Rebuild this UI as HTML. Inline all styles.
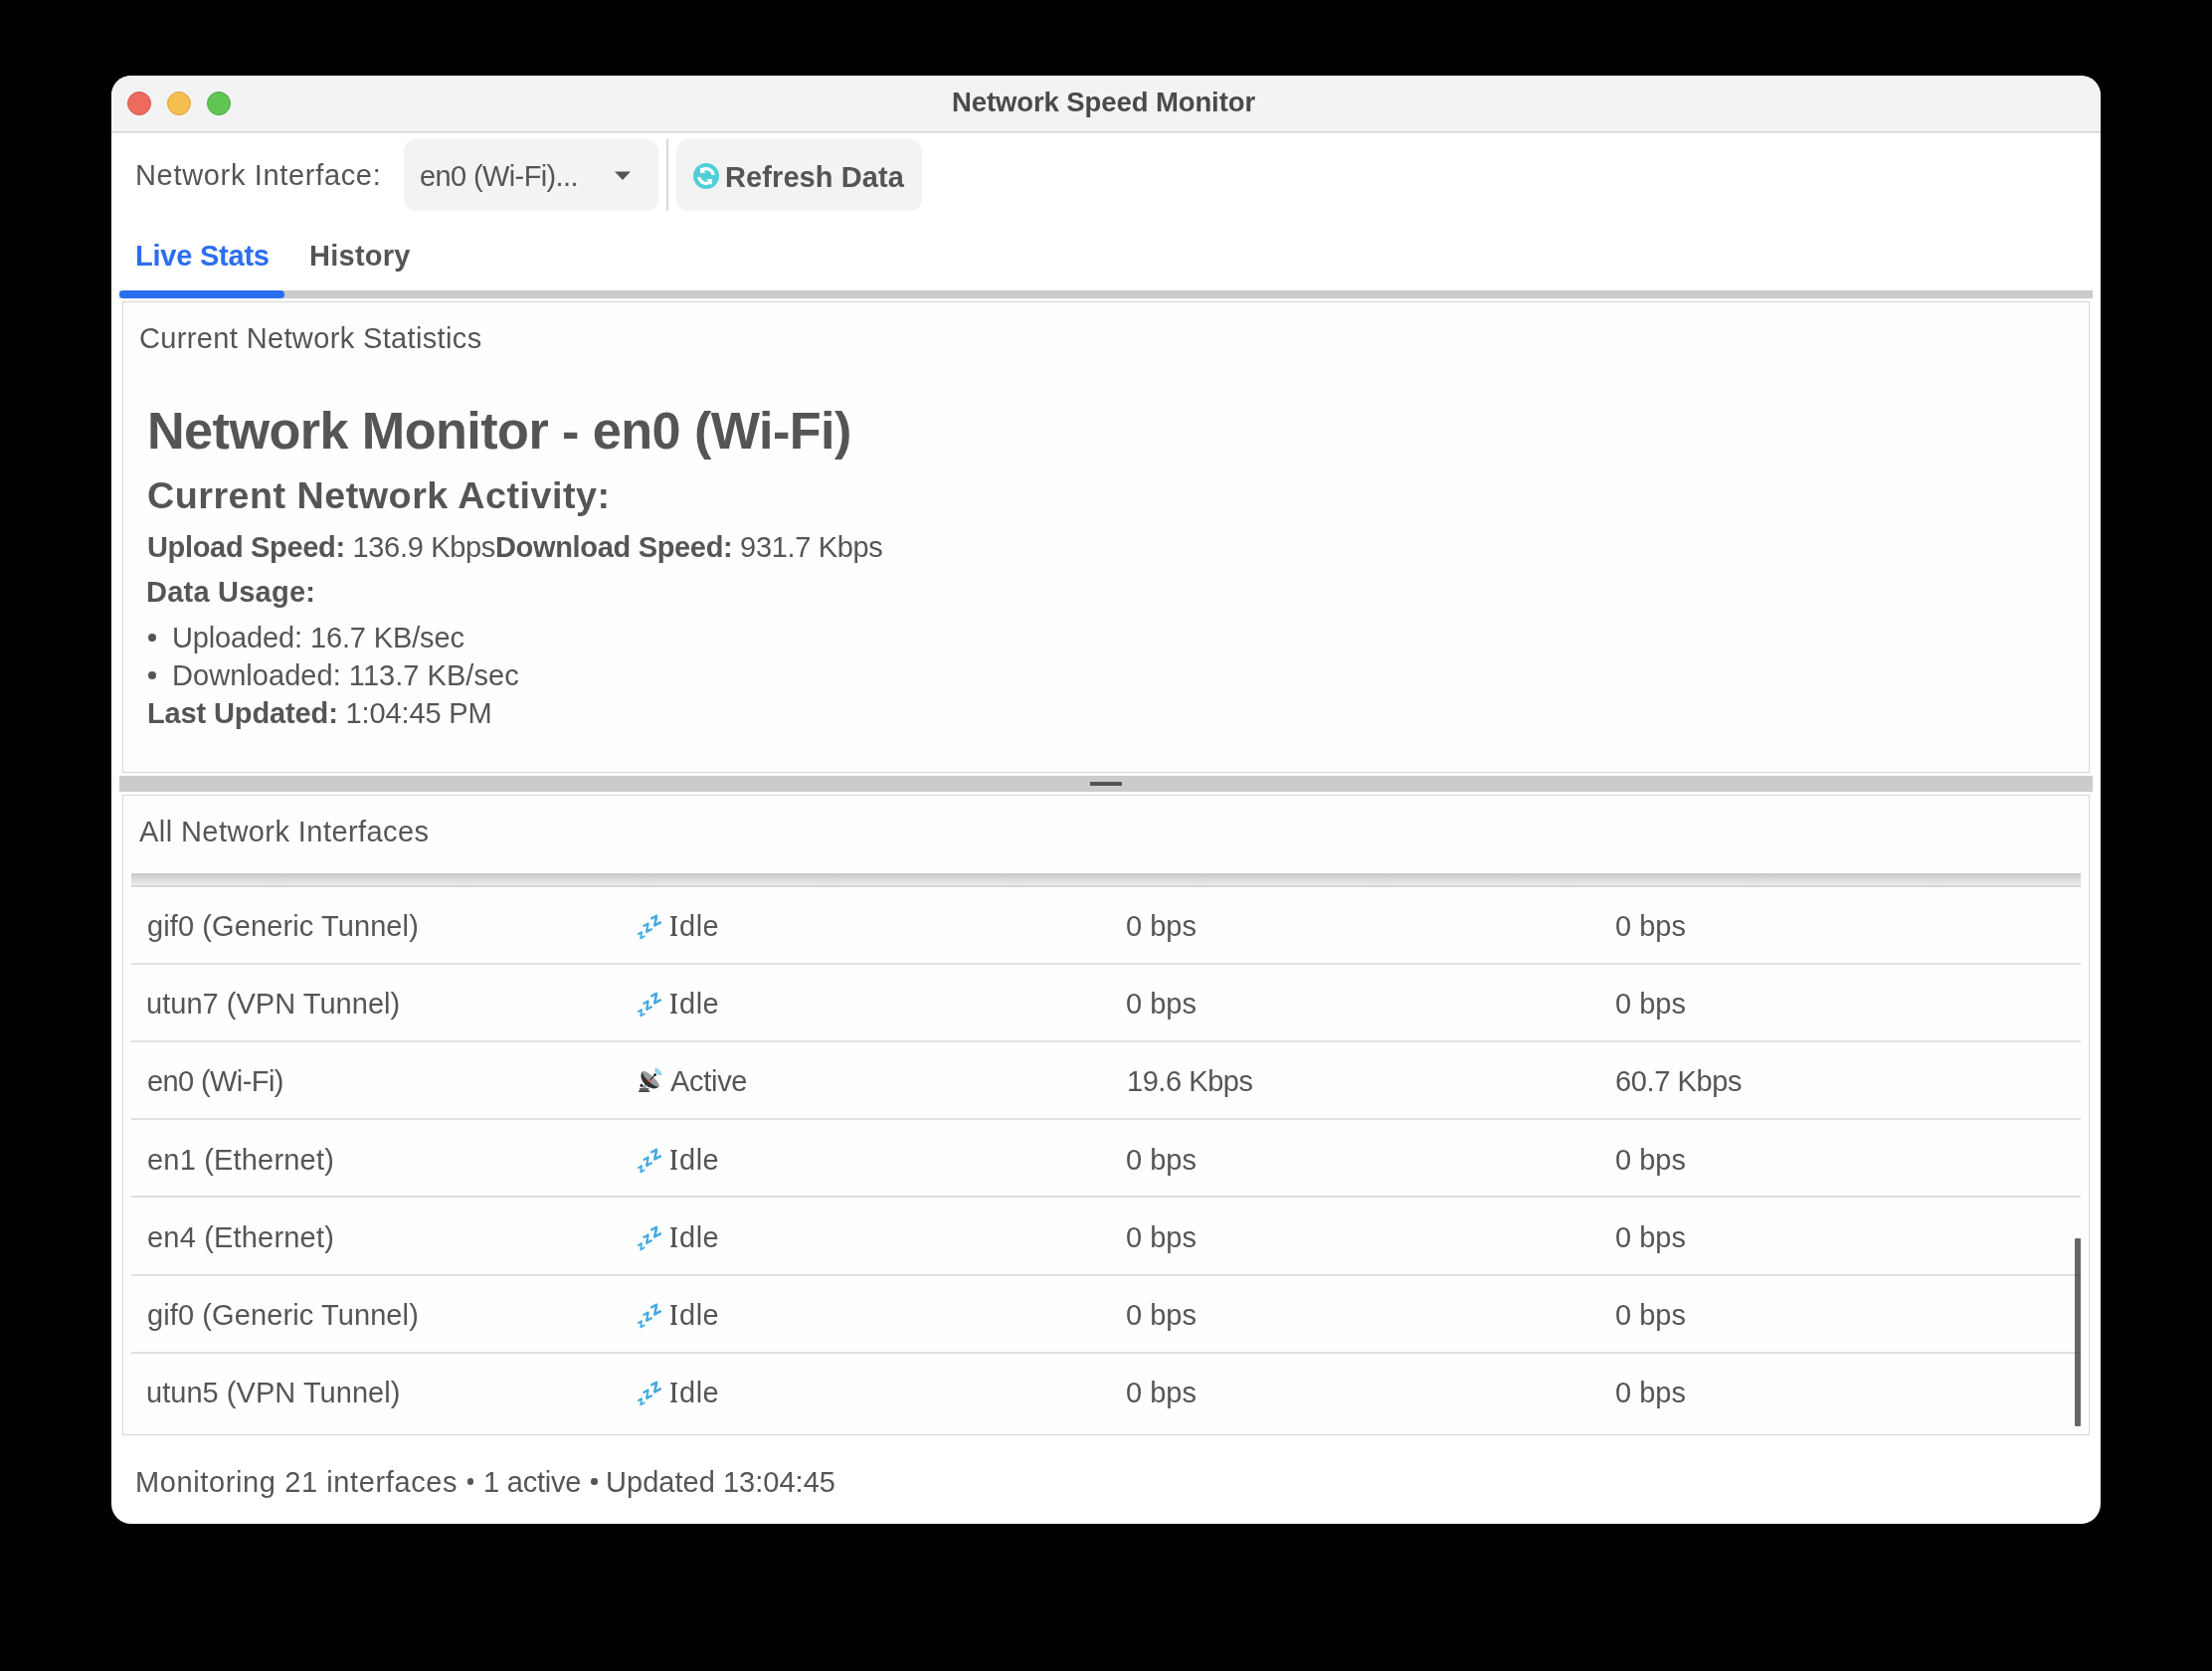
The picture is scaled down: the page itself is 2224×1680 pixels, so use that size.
<!DOCTYPE html>
<html><head><meta charset="utf-8"><style>
html,body{margin:0;padding:0}
body{width:2224px;height:1680px;background:#000;position:relative;overflow:hidden;font-family:"Liberation Sans",sans-serif}
.t{position:absolute;white-space:nowrap;will-change:transform}
.abs{position:absolute}
b{font-weight:bold}
</style></head><body>

<div class="abs" style="left:112px;top:76px;width:2000px;height:1456px;border-radius:20px;background:#ffffff;overflow:hidden">
<div class="abs" style="left:0;top:0;width:2000px;height:56px;background:#f3f3f3"></div>
<div class="abs" style="left:0;top:56px;width:2000px;height:1px;background:#d3d3d3"></div>
<div class="abs" style="left:0;top:57px;width:2000px;height:1px;background:#e8e8e8"></div>
</div>
<div class="abs" style="left:128px;top:92px;width:22px;height:22px;border-radius:50%;background:#ed6a5e;border:1px solid #d9544a"></div>
<div class="abs" style="left:168px;top:92px;width:22px;height:22px;border-radius:50%;background:#f5bf4f;border:1px solid #dba43e"></div>
<div class="abs" style="left:208px;top:92px;width:22px;height:22px;border-radius:50%;background:#61c554;border:1px solid #4aa93f"></div>
<div class="t" style="left:957.0px;top:89.0px;font-size:27.5px;line-height:27.5px;font-weight:bold;letter-spacing:-0.1px;color:#4a4a4a;">Network Speed Monitor</div>
<div class="t" style="left:135.6px;top:162.0px;font-size:29.0px;line-height:29.0px;font-weight:normal;letter-spacing:0.671px;color:#555555;">Network Interface:</div>
<div class="abs" style="left:406px;top:140px;width:256px;height:72px;border-radius:12px;background:#f3f3f3"></div>
<div class="t" style="left:422.0px;top:163.0px;font-size:29.0px;line-height:29.0px;font-weight:normal;letter-spacing:-0.615px;color:#555555;">en0 (Wi-Fi)...</div>
<svg class="abs" style="left:616px;top:170px" width="20" height="14" viewBox="0 0 20 14"><path d="M2 2.4 L18 2.4 L10 11 Z" fill="#555"/></svg>
<div class="abs" style="left:670px;top:140px;width:2px;height:72px;background:#d8d8d8"></div>
<div class="abs" style="left:680px;top:140px;width:247px;height:72px;border-radius:12px;background:#f3f3f3"></div>
<svg class="abs" style="left:697px;top:164px" width="26" height="26" viewBox="0 0 26 26">
<circle cx="13" cy="13" r="13" fill="#4ecfd8"/>
<path id="ra" d="M7 4 L8.5 5.2 A9 9 0 0 1 21.9 11.9 L18.56 11.9 A5.6 5.6 0 0 0 10.6 7.9 L12.9 9.9 L7 9.9 Z" fill="#fff"/>
<path d="M7 4 L8.5 5.2 A9 9 0 0 1 21.9 11.9 L18.56 11.9 A5.6 5.6 0 0 0 10.6 7.9 L12.9 9.9 L7 9.9 Z" fill="#fff" transform="rotate(180 13 13)"/>
</svg>
<div class="t" style="left:729.0px;top:164.0px;font-size:29.0px;line-height:29.0px;font-weight:bold;letter-spacing:0.091px;color:#555555;">Refresh Data</div>
<div class="t" style="left:136.0px;top:243.0px;font-size:29.0px;line-height:29.0px;font-weight:bold;letter-spacing:-0.222px;color:#2b6ef0;">Live Stats</div>
<div class="t" style="left:310.5px;top:243.0px;font-size:29.0px;line-height:29.0px;font-weight:bold;letter-spacing:0.25px;color:#555555;">History</div>
<div class="abs" style="left:120px;top:292px;width:1984px;height:8px;background:#cbcbcb"></div>
<div class="abs" style="left:120px;top:292px;width:166px;height:8px;border-radius:4px;background:#2a6ef0"></div>
<div class="abs" style="left:123px;top:303px;width:1976px;height:472px;border:1px solid #d6d6d6;background:#fefefe"></div>
<div class="t" style="left:140.0px;top:326.0px;font-size:29.0px;line-height:29.0px;font-weight:normal;letter-spacing:0.36px;color:#555555;">Current Network Statistics</div>
<div class="t" style="left:148.0px;top:407.0px;font-size:52.2px;line-height:52.2px;font-weight:bold;letter-spacing:-0.571px;color:#555555;">Network Monitor - en0 (Wi-Fi)</div>
<div class="t" style="left:148.0px;top:480.0px;font-size:37.7px;line-height:37.7px;font-weight:bold;letter-spacing:0.5px;color:#555555;">Current Network Activity:</div>
<div class="t" style="left:148.0px;top:535.5px;font-size:29.0px;line-height:29.0px;font-weight:normal;letter-spacing:-0.327px;color:#555555;"><b>Upload Speed:</b> 136.9 Kbps<b>Download Speed:</b> 931.7 Kbps</div>
<div class="t" style="left:147.4px;top:581.0px;font-size:29.0px;line-height:29.0px;font-weight:bold;letter-spacing:0.23px;color:#555555;">Data Usage:</div>
<div class="abs" style="left:149px;top:637px;width:8px;height:8px;border-radius:50%;background:#555"></div>
<div class="t" style="left:172.7px;top:627.0px;font-size:29.0px;line-height:29.0px;font-weight:normal;letter-spacing:-0.135px;color:#555555;">Uploaded: 16.7 KB/sec</div>
<div class="abs" style="left:149px;top:675px;width:8px;height:8px;border-radius:50%;background:#555"></div>
<div class="t" style="left:173.0px;top:665.0px;font-size:29.0px;line-height:29.0px;font-weight:normal;letter-spacing:0.043px;color:#555555;">Downloaded: 113.7 KB/sec</div>
<div class="t" style="left:148.0px;top:703.0px;font-size:29.0px;line-height:29.0px;font-weight:normal;letter-spacing:-0.13px;color:#555555;"><b>Last Updated:</b> 1:04:45 PM</div>
<div class="abs" style="left:120px;top:780px;width:1984px;height:16px;background:#cccccc"></div>
<div class="abs" style="left:1096px;top:786px;width:32px;height:4px;background:#555"></div>
<div class="abs" style="left:123px;top:799px;width:1976px;height:642px;border:1px solid #d6d6d6;background:#fefefe"></div>
<div class="t" style="left:140.0px;top:822.0px;font-size:29.0px;line-height:29.0px;font-weight:normal;letter-spacing:0.429px;color:#555555;">All Network Interfaces</div>
<div class="abs" style="left:132px;top:878px;width:1960px;height:12px;background:linear-gradient(#c9c9c9,#ececec)"></div>
<div class="abs" style="left:132px;top:890px;width:1960px;height:2px;background:#d6d6d6"></div>
<div class="abs" style="left:132px;top:968px;width:1960px;height:2px;background:#e0e0e0"></div>
<div class="abs" style="left:132px;top:1046px;width:1960px;height:2px;background:#e0e0e0"></div>
<div class="abs" style="left:132px;top:1124px;width:1960px;height:2px;background:#e0e0e0"></div>
<div class="abs" style="left:132px;top:1202px;width:1960px;height:2px;background:#e0e0e0"></div>
<div class="abs" style="left:132px;top:1281px;width:1960px;height:2px;background:#e0e0e0"></div>
<div class="abs" style="left:132px;top:1359px;width:1960px;height:2px;background:#e0e0e0"></div>
<div class="t" style="left:148.0px;top:917px;font-size:29.0px;line-height:29.0px;font-weight:normal;letter-spacing:0.1px;color:#555555;">gif0 (Generic Tunnel)</div>
<svg class="abs" style="left:640px;top:919px;will-change:transform" width="26" height="26" viewBox="0 0 26 26">
<g fill="#3fa9e1" font-family="Liberation Sans" font-weight="bold" text-anchor="middle">
<text transform="translate(4.6 21.3) rotate(-32)" y="3" font-size="8.8" stroke="#3fa9e1" stroke-width="0.7">Z</text>
<text transform="translate(11.1 13.7) rotate(-28)" y="3.9" font-size="11.4" stroke="#3fa9e1" stroke-width="0.8">Z</text>
<text transform="translate(19.4 6.6) rotate(-27)" y="4.6" font-size="13.4" stroke="#3fa9e1" stroke-width="0.9">Z</text>
</g></svg>
<div class="abs" style="left:674px;top:921px;width:7px;height:2px;background:#555;border-radius:0 0 3px 3px"></div>
<div class="abs" style="left:674px;top:939px;width:7px;height:2px;background:#555;border-radius:3px 3px 0 0"></div>
<div class="abs" style="left:676.3px;top:921px;width:2.7px;height:20px;background:#555"></div>
<div class="t" style="left:683.0px;top:917px;font-size:29.0px;line-height:29.0px;font-weight:normal;letter-spacing:0.5px;color:#555555;">dle</div>
<div class="t" style="left:1132.0px;top:917px;font-size:29.0px;line-height:29.0px;font-weight:normal;letter-spacing:0.0px;color:#555555;">0 bps</div>
<div class="t" style="left:1624.0px;top:917px;font-size:29.0px;line-height:29.0px;font-weight:normal;letter-spacing:0.0px;color:#555555;">0 bps</div>
<div class="t" style="left:147.0px;top:995px;font-size:29.0px;line-height:29.0px;font-weight:normal;letter-spacing:0.029px;color:#555555;">utun7 (VPN Tunnel)</div>
<svg class="abs" style="left:640px;top:997px;will-change:transform" width="26" height="26" viewBox="0 0 26 26">
<g fill="#3fa9e1" font-family="Liberation Sans" font-weight="bold" text-anchor="middle">
<text transform="translate(4.6 21.3) rotate(-32)" y="3" font-size="8.8" stroke="#3fa9e1" stroke-width="0.7">Z</text>
<text transform="translate(11.1 13.7) rotate(-28)" y="3.9" font-size="11.4" stroke="#3fa9e1" stroke-width="0.8">Z</text>
<text transform="translate(19.4 6.6) rotate(-27)" y="4.6" font-size="13.4" stroke="#3fa9e1" stroke-width="0.9">Z</text>
</g></svg>
<div class="abs" style="left:674px;top:999px;width:7px;height:2px;background:#555;border-radius:0 0 3px 3px"></div>
<div class="abs" style="left:674px;top:1017px;width:7px;height:2px;background:#555;border-radius:3px 3px 0 0"></div>
<div class="abs" style="left:676.3px;top:999px;width:2.7px;height:20px;background:#555"></div>
<div class="t" style="left:683.0px;top:995px;font-size:29.0px;line-height:29.0px;font-weight:normal;letter-spacing:0.5px;color:#555555;">dle</div>
<div class="t" style="left:1132.0px;top:995px;font-size:29.0px;line-height:29.0px;font-weight:normal;letter-spacing:0.0px;color:#555555;">0 bps</div>
<div class="t" style="left:1624.0px;top:995px;font-size:29.0px;line-height:29.0px;font-weight:normal;letter-spacing:0.0px;color:#555555;">0 bps</div>
<div class="t" style="left:148.0px;top:1073px;font-size:29.0px;line-height:29.0px;font-weight:normal;letter-spacing:-0.6px;color:#555555;">en0 (Wi-Fi)</div>
<svg class="abs" style="left:640px;top:1074px" width="26" height="26" viewBox="0 0 26 26">
<path d="M5.2 18 L8.6 16.6 L10.8 21 H6.6 Z" fill="#9a9c9e"/>
<rect x="3" y="20" width="9.2" height="3.4" fill="#5f5f5f"/>
<rect x="2" y="22.6" width="11.2" height="1.4" fill="#4a4a4a"/>
<ellipse cx="4.9" cy="17.3" rx="1.3" ry="1.6" fill="#111"/>
<g transform="translate(14.5 10.55) rotate(42.9)">
<path d="M-11.25 0 A11.25 8.4 0 0 0 11.25 0 Z" fill="#333"/>
<ellipse cx="0" cy="0.3" rx="11.25" ry="3.2" fill="#999da1"/>
</g>
<line x1="13.1" y1="12.5" x2="18.6" y2="6.7" stroke="#333" stroke-width="1.1"/>
<circle cx="13.1" cy="12.5" r="1.4" fill="#e65a50"/>
<circle cx="18.6" cy="6.7" r="1.4" fill="#1a1a1a"/>
<g fill="none" stroke="#3fa6e3" stroke-width="0.9">
<path d="M18.6 3.5 A3.2 3.2 0 0 1 21.8 6.6"/>
<path d="M18.6 2.1 A4.6 4.6 0 0 1 23.2 6.8"/>
<path d="M18.4 0.7 A6 6 0 0 1 24.6 6.9"/>
</g>
</svg>
<div class="t" style="left:673.5px;top:1073px;font-size:29.0px;line-height:29.0px;font-weight:normal;letter-spacing:-0.3px;color:#555555;">Active</div>
<div class="t" style="left:1132.6px;top:1073px;font-size:29.0px;line-height:29.0px;font-weight:normal;letter-spacing:-0.45px;color:#555555;">19.6 Kbps</div>
<div class="t" style="left:1624.0px;top:1073px;font-size:29.0px;line-height:29.0px;font-weight:normal;letter-spacing:-0.375px;color:#555555;">60.7 Kbps</div>
<div class="t" style="left:148.0px;top:1152px;font-size:29.0px;line-height:29.0px;font-weight:normal;letter-spacing:0.185px;color:#555555;">en1 (Ethernet)</div>
<svg class="abs" style="left:640px;top:1154px;will-change:transform" width="26" height="26" viewBox="0 0 26 26">
<g fill="#3fa9e1" font-family="Liberation Sans" font-weight="bold" text-anchor="middle">
<text transform="translate(4.6 21.3) rotate(-32)" y="3" font-size="8.8" stroke="#3fa9e1" stroke-width="0.7">Z</text>
<text transform="translate(11.1 13.7) rotate(-28)" y="3.9" font-size="11.4" stroke="#3fa9e1" stroke-width="0.8">Z</text>
<text transform="translate(19.4 6.6) rotate(-27)" y="4.6" font-size="13.4" stroke="#3fa9e1" stroke-width="0.9">Z</text>
</g></svg>
<div class="abs" style="left:674px;top:1156px;width:7px;height:2px;background:#555;border-radius:0 0 3px 3px"></div>
<div class="abs" style="left:674px;top:1174px;width:7px;height:2px;background:#555;border-radius:3px 3px 0 0"></div>
<div class="abs" style="left:676.3px;top:1156px;width:2.7px;height:20px;background:#555"></div>
<div class="t" style="left:683.0px;top:1152px;font-size:29.0px;line-height:29.0px;font-weight:normal;letter-spacing:0.5px;color:#555555;">dle</div>
<div class="t" style="left:1132.0px;top:1152px;font-size:29.0px;line-height:29.0px;font-weight:normal;letter-spacing:0.0px;color:#555555;">0 bps</div>
<div class="t" style="left:1624.0px;top:1152px;font-size:29.0px;line-height:29.0px;font-weight:normal;letter-spacing:0.0px;color:#555555;">0 bps</div>
<div class="t" style="left:148.0px;top:1230px;font-size:29.0px;line-height:29.0px;font-weight:normal;letter-spacing:0.185px;color:#555555;">en4 (Ethernet)</div>
<svg class="abs" style="left:640px;top:1232px;will-change:transform" width="26" height="26" viewBox="0 0 26 26">
<g fill="#3fa9e1" font-family="Liberation Sans" font-weight="bold" text-anchor="middle">
<text transform="translate(4.6 21.3) rotate(-32)" y="3" font-size="8.8" stroke="#3fa9e1" stroke-width="0.7">Z</text>
<text transform="translate(11.1 13.7) rotate(-28)" y="3.9" font-size="11.4" stroke="#3fa9e1" stroke-width="0.8">Z</text>
<text transform="translate(19.4 6.6) rotate(-27)" y="4.6" font-size="13.4" stroke="#3fa9e1" stroke-width="0.9">Z</text>
</g></svg>
<div class="abs" style="left:674px;top:1234px;width:7px;height:2px;background:#555;border-radius:0 0 3px 3px"></div>
<div class="abs" style="left:674px;top:1252px;width:7px;height:2px;background:#555;border-radius:3px 3px 0 0"></div>
<div class="abs" style="left:676.3px;top:1234px;width:2.7px;height:20px;background:#555"></div>
<div class="t" style="left:683.0px;top:1230px;font-size:29.0px;line-height:29.0px;font-weight:normal;letter-spacing:0.5px;color:#555555;">dle</div>
<div class="t" style="left:1132.0px;top:1230px;font-size:29.0px;line-height:29.0px;font-weight:normal;letter-spacing:0.0px;color:#555555;">0 bps</div>
<div class="t" style="left:1624.0px;top:1230px;font-size:29.0px;line-height:29.0px;font-weight:normal;letter-spacing:0.0px;color:#555555;">0 bps</div>
<div class="t" style="left:148.0px;top:1308px;font-size:29.0px;line-height:29.0px;font-weight:normal;letter-spacing:0.1px;color:#555555;">gif0 (Generic Tunnel)</div>
<svg class="abs" style="left:640px;top:1310px;will-change:transform" width="26" height="26" viewBox="0 0 26 26">
<g fill="#3fa9e1" font-family="Liberation Sans" font-weight="bold" text-anchor="middle">
<text transform="translate(4.6 21.3) rotate(-32)" y="3" font-size="8.8" stroke="#3fa9e1" stroke-width="0.7">Z</text>
<text transform="translate(11.1 13.7) rotate(-28)" y="3.9" font-size="11.4" stroke="#3fa9e1" stroke-width="0.8">Z</text>
<text transform="translate(19.4 6.6) rotate(-27)" y="4.6" font-size="13.4" stroke="#3fa9e1" stroke-width="0.9">Z</text>
</g></svg>
<div class="abs" style="left:674px;top:1312px;width:7px;height:2px;background:#555;border-radius:0 0 3px 3px"></div>
<div class="abs" style="left:674px;top:1330px;width:7px;height:2px;background:#555;border-radius:3px 3px 0 0"></div>
<div class="abs" style="left:676.3px;top:1312px;width:2.7px;height:20px;background:#555"></div>
<div class="t" style="left:683.0px;top:1308px;font-size:29.0px;line-height:29.0px;font-weight:normal;letter-spacing:0.5px;color:#555555;">dle</div>
<div class="t" style="left:1132.0px;top:1308px;font-size:29.0px;line-height:29.0px;font-weight:normal;letter-spacing:0.0px;color:#555555;">0 bps</div>
<div class="t" style="left:1624.0px;top:1308px;font-size:29.0px;line-height:29.0px;font-weight:normal;letter-spacing:0.0px;color:#555555;">0 bps</div>
<div class="t" style="left:147.0px;top:1386px;font-size:29.0px;line-height:29.0px;font-weight:normal;letter-spacing:0.041px;color:#555555;">utun5 (VPN Tunnel)</div>
<svg class="abs" style="left:640px;top:1388px;will-change:transform" width="26" height="26" viewBox="0 0 26 26">
<g fill="#3fa9e1" font-family="Liberation Sans" font-weight="bold" text-anchor="middle">
<text transform="translate(4.6 21.3) rotate(-32)" y="3" font-size="8.8" stroke="#3fa9e1" stroke-width="0.7">Z</text>
<text transform="translate(11.1 13.7) rotate(-28)" y="3.9" font-size="11.4" stroke="#3fa9e1" stroke-width="0.8">Z</text>
<text transform="translate(19.4 6.6) rotate(-27)" y="4.6" font-size="13.4" stroke="#3fa9e1" stroke-width="0.9">Z</text>
</g></svg>
<div class="abs" style="left:674px;top:1390px;width:7px;height:2px;background:#555;border-radius:0 0 3px 3px"></div>
<div class="abs" style="left:674px;top:1408px;width:7px;height:2px;background:#555;border-radius:3px 3px 0 0"></div>
<div class="abs" style="left:676.3px;top:1390px;width:2.7px;height:20px;background:#555"></div>
<div class="t" style="left:683.0px;top:1386px;font-size:29.0px;line-height:29.0px;font-weight:normal;letter-spacing:0.5px;color:#555555;">dle</div>
<div class="t" style="left:1132.0px;top:1386px;font-size:29.0px;line-height:29.0px;font-weight:normal;letter-spacing:0.0px;color:#555555;">0 bps</div>
<div class="t" style="left:1624.0px;top:1386px;font-size:29.0px;line-height:29.0px;font-weight:normal;letter-spacing:0.0px;color:#555555;">0 bps</div>
<div class="abs" style="left:2086px;top:1245px;width:6px;height:189px;background:rgba(51,51,51,0.75);border-radius:1px"></div>
<div class="t" style="left:136.0px;top:1476.0px;font-size:29.0px;line-height:29.0px;font-weight:normal;letter-spacing:0.609px;color:#555555;">Monitoring 21 interfaces</div>
<div class="t" style="left:485.5px;top:1476.0px;font-size:29.0px;line-height:29.0px;font-weight:normal;letter-spacing:-0.214px;color:#555555;">1 active</div>
<div class="t" style="left:609.3px;top:1476.0px;font-size:29.0px;line-height:29.0px;font-weight:normal;letter-spacing:0.027px;color:#555555;">Updated 13:04:45</div>
<div class="abs" style="left:469.5px;top:1486.3px;width:6.5px;height:6.5px;border-radius:50%;background:#555"></div>
<div class="abs" style="left:594px;top:1486.3px;width:6.5px;height:6.5px;border-radius:50%;background:#555"></div>
</body></html>
